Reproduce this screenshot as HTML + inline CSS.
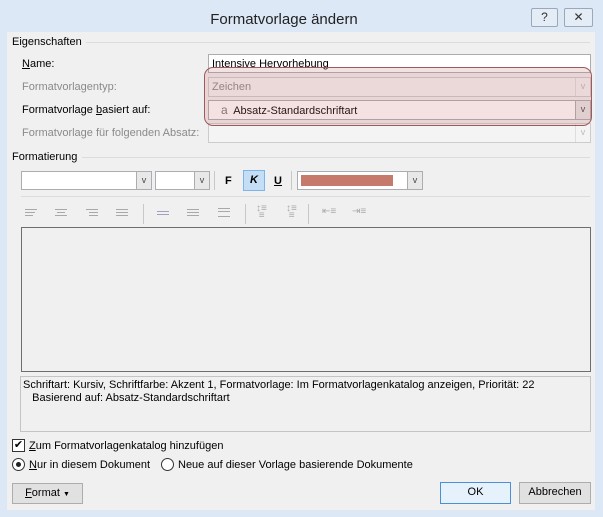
<!DOCTYPE html>
<html><head><meta charset="utf-8"><style>
*{box-sizing:border-box;margin:0;padding:0}
body{width:603px;height:517px;background:#dce8f6;font-family:"Liberation Sans",sans-serif;font-size:11px;color:#000;position:relative;overflow:hidden}
.a{position:absolute;white-space:nowrap}
.content{position:absolute;left:7px;top:32px;width:588px;height:478px;background:#f0f0f0}
.box{position:absolute;background:#fff;border:1px solid #abadb3}
.dd{position:absolute;right:0;top:0;bottom:0;width:15px;border-left:1px solid #abadb3;background:#e8e8e8;font-size:9px;text-align:center;color:#444;line-height:16px}
.gray{color:#8a8a8a}
.line{position:absolute;height:1px;background:#dcdcdc}
.btn{position:absolute;border:1px solid #adadad;background:#e1e1e1;text-align:center;line-height:19px}
.ic{position:absolute;width:12px}
.ic i{display:block;height:1px;background:#a8a8a8;margin-bottom:2px}
.sep{position:absolute;width:1px;background:#c8c8c8}
</style></head><body>
<div class="a" style="left:0;top:11px;width:568px;text-align:center;font-size:15px;color:#222">Formatvorlage ändern</div>
<div class="a" style="left:531px;top:8px;width:27px;height:19px;border:1px solid #9aa8ba;border-radius:2px;background:#e4ecf5;text-align:center;font-size:12px;line-height:17px;color:#333">?</div>
<div class="a" style="left:564px;top:8px;width:29px;height:19px;border:1px solid #9aa8ba;border-radius:2px;background:#e4ecf5;text-align:center;font-size:12px;line-height:17px;color:#333">✕</div>
<div class="content"></div>

<div class="a" style="left:12px;top:36px">Eigenschaften</div>
<div class="line" style="left:86px;top:42px;width:504px"></div>
<div class="a" style="left:22px;top:58px"><u>N</u>ame:</div>
<div class="box" style="left:208px;top:54px;width:383px;height:19px"></div>
<div class="a" style="left:212px;top:58px">Intensive Hervorhebung</div>
<div class="a gray" style="left:22px;top:81px">Formatvorlagentyp:</div>
<div class="box" style="left:208px;top:77px;width:383px;height:20px;background:#f4f4f4;border-color:#ccc"><div class="dd" style="background:#f4f4f4;border-color:#ddd;color:#bbb">v</div></div>
<div class="a gray" style="left:212px;top:81px">Zeichen</div>
<div class="a" style="left:22px;top:104px">Formatvorlage <u>b</u>asiert auf:</div>
<div class="box" style="left:208px;top:100px;width:383px;height:20px"><div class="dd">v</div></div>
<div class="a" style="left:221px;top:103px"><span style="color:#777;font-size:12px">a</span>&nbsp; Absatz-Standardschriftart</div>
<div class="a gray" style="left:22px;top:127px">Formatvorlage für folgenden Absatz:</div>
<div class="box" style="left:208px;top:123px;width:383px;height:20px;background:#f4f4f4;border-color:#ccc"><div class="dd" style="background:#f4f4f4;border-color:#ddd;color:#bbb">v</div></div>
<div class="a" style="left:204px;top:67px;width:388px;height:59px;border:1px solid #9c5a5a;border-radius:9px;background:rgba(200,110,110,0.2)"></div>

<div class="a" style="left:12px;top:151px">Formatierung</div>
<div class="line" style="left:82px;top:157px;width:508px"></div>
<div class="box" style="left:21px;top:171px;width:131px;height:19px"><div class="dd">v</div></div>
<div class="box" style="left:155px;top:171px;width:55px;height:19px"><div class="dd">v</div></div>
<div class="sep" style="left:214px;top:171px;height:19px"></div>
<div class="a" style="left:225px;top:175px;font-weight:bold">F</div>
<div class="a" style="left:243px;top:170px;width:22px;height:21px;background:#c4def6;border:1px solid #7eb4ea;text-align:center;line-height:19px;font-weight:bold;font-style:italic">K</div>
<div class="a" style="left:274px;top:175px;font-weight:bold;text-decoration:underline">U</div>
<div class="sep" style="left:291px;top:171px;height:19px"></div>
<div class="box" style="left:297px;top:171px;width:126px;height:19px"><div style="position:absolute;left:3px;top:3px;width:92px;height:11px;background:#c57a6b"></div><div class="dd">v</div></div>
<div class="line" style="left:21px;top:196px;width:569px"></div>

<div class="ic" style="left:25px;top:209px"><i></i><i style="width:10px"></i><i style="width:8px"></i></div>
<div class="ic" style="left:55px;top:209px"><i></i><i style="width:8px;margin-left:2px"></i><i></i></div>
<div class="ic" style="left:86px;top:209px"><i></i><i style="width:9px;margin-left:3px"></i><i style="width:9px;margin-left:3px"></i></div>
<div class="ic" style="left:116px;top:209px"><i></i><i></i><i></i></div>
<div class="sep" style="left:143px;top:204px;height:20px"></div>
<div class="ic" style="left:157px;top:211px"><i style="background:#a0a0c0"></i><i style="background:#a0a0c0"></i></div>
<div class="ic" style="left:187px;top:209px"><i></i><i></i><i></i></div>
<div class="ic" style="left:218px;top:208px"><i></i><i style="margin-bottom:4px"></i><i></i></div>
<div class="sep" style="left:245px;top:204px;height:20px"></div>
<div class="a" style="left:256px;top:205px;font-size:10px;color:#aaa;line-height:7px">↕≡<br>&nbsp;≡</div>
<div class="a" style="left:286px;top:205px;font-size:10px;color:#aaa;line-height:7px">↕≡<br>&nbsp;≡</div>
<div class="sep" style="left:308px;top:204px;height:20px"></div>
<div class="a" style="left:322px;top:206px;font-size:10px;color:#aaa">⇤≡</div>
<div class="a" style="left:352px;top:206px;font-size:10px;color:#aaa">⇥≡</div>

<div class="a" style="left:21px;top:227px;width:570px;height:145px;border:1px solid #6e6e6e;background:#f0f0f0"></div>
<div class="a" style="left:20px;top:376px;width:571px;height:56px;border:1px solid #c4c4c4;background:#f0f0f0"></div>
<div class="a" style="left:23px;top:379px;line-height:13px">Schriftart: Kursiv, Schriftfarbe: Akzent 1, Formatvorlage: Im Formatvorlagenkatalog anzeigen, Priorität: 22<br>&nbsp;&nbsp;&nbsp;Basierend auf: Absatz-Standardschriftart</div>

<div class="a" style="left:12px;top:439px;width:13px;height:13px;border:1px solid #333;background:#fff;font-size:11px;line-height:11px;text-align:center">✔</div>
<div class="a" style="left:29px;top:440px"><u>Z</u>um Formatvorlagenkatalog hinzufügen</div>
<div class="a" style="left:12px;top:458px;width:13px;height:13px;border:1px solid #333;border-radius:50%;background:#fff"><div style="position:absolute;left:3px;top:3px;width:5px;height:5px;border-radius:50%;background:#222"></div></div>
<div class="a" style="left:29px;top:459px"><u>N</u>ur in diesem Dokument</div>
<div class="a" style="left:161px;top:458px;width:13px;height:13px;border:1px solid #333;border-radius:50%;background:#fff"></div>
<div class="a" style="left:178px;top:459px">Neue auf dieser Vorlage basierende Dokumente</div>

<div class="btn" style="left:12px;top:483px;width:71px;height:21px"><u>F</u>ormat <span style="font-size:7px">▼</span></div>
<div class="btn" style="left:440px;top:482px;width:71px;height:22px;border-color:#4a90d9;background:#e5f1fb">OK</div>
<div class="btn" style="left:519px;top:482px;width:72px;height:22px">Abbrechen</div>
</body></html>
